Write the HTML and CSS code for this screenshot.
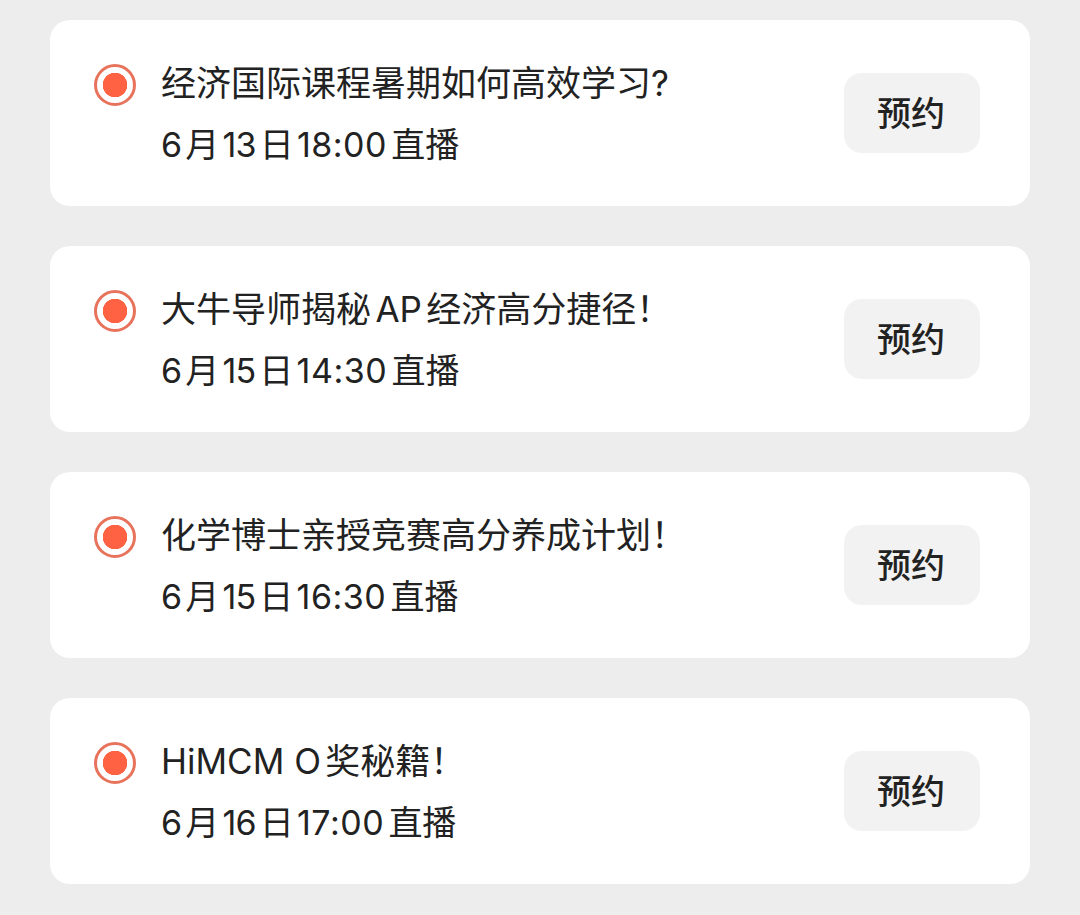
FILE: index.html
```html
<!DOCTYPE html>
<html lang="zh-CN">
<head>
  <meta charset="UTF-8">
  <meta name="viewport" content="width=device-width, initial-scale=1.0">
  <title>直播预约</title>
  <link rel="stylesheet" href="styles.css">
</head>
<body>
  <div class="list">
    <div class="card">
      <div class="dot"></div>
      <div class="info">
        <div class="title plain">经济国际课程暑期如何高效学习?</div>
        <div class="time"><span class="date">6月13日</span><span class="clock">18:00</span>直播</div>
      </div>
      <button class="book">预约</button>
    </div>
    <div class="card">
      <div class="dot"></div>
      <div class="info">
        <div class="title">大牛导师揭秘AP经济高分捷径！</div>
        <div class="time"><span class="date">6月15日</span><span class="clock">14:30</span>直播</div>
      </div>
      <button class="book">预约</button>
    </div>
    <div class="card">
      <div class="dot"></div>
      <div class="info">
        <div class="title">化学博士亲授竞赛高分养成计划！</div>
        <div class="time"><span class="date">6月15日</span><span class="clock">16:30</span>直播</div>
      </div>
      <button class="book">预约</button>
    </div>
    <div class="card">
      <div class="dot"></div>
      <div class="info">
        <div class="title">HiMCM O奖秘籍！</div>
        <div class="time"><span class="date">6月16日</span><span class="clock">17:00</span>直播</div>
      </div>
      <button class="book">预约</button>
    </div>
  </div>
</body>
</html>
```

FILE: styles.css
```css
body {
  margin: 0;
  background-color: #ededed;
  font-family: "Inter", "Noto Sans CJK SC", sans-serif;
  color: #222;
}

.list {
  display: flex;
  flex-direction: column;
  gap: 40px;
  padding: 20px 50px 31px;
}

.card {
  display: flex;
  align-items: flex-start;
  height: 186px;
  box-sizing: border-box;
  padding: 44px 50px 0 44px;
  background-color: #fff;
  border-radius: 20px;
}

.dot {
  flex: none;
  width: 42px;
  height: 42px;
  box-sizing: border-box;
  border: 3px solid #e8735c;
  border-radius: 50%;
  background: radial-gradient(circle, #ff6242 12px, #fff 12.5px);
}

.info {
  flex: 1;
  margin-left: 25px;
  text-autospace: normal;
}

.title {
  font-size: 35px;
  line-height: 42px;
  margin-top: -2px;
}

.title.plain {
  text-autospace: no-autospace;
}

.time {
  font-size: 34px;
  line-height: 42px;
  margin-top: 20px;
}

.date {
  letter-spacing: -1px;
}

.clock {
  letter-spacing: 0.5px;
}

.book {
  flex: none;
  width: 136px;
  height: 80px;
  margin-top: 9px;
  padding: 0 2px 3px 0;
  border: none;
  border-radius: 18px;
  background-color: #f2f2f2;
  color: #222;
  font-family: inherit;
  font-size: 34px;
  font-weight: 500;
}
```
